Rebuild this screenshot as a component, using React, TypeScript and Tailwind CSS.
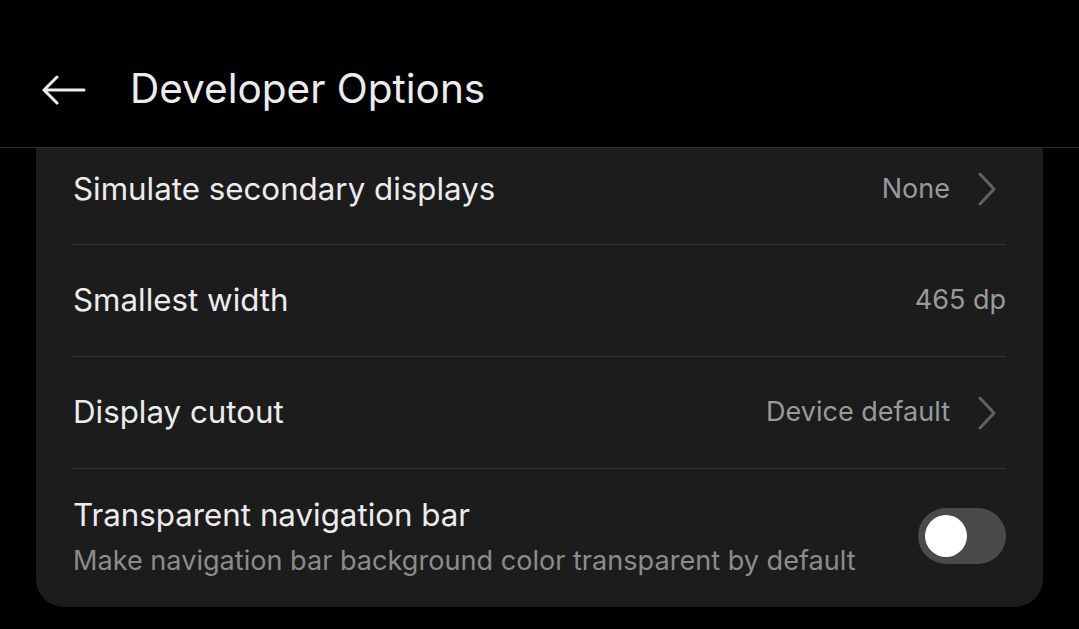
import { useState } from 'react';

function Chevron() {
	return (
		<svg width="20" height="34" viewBox="0 0 20 34" fill="none" className="ml-[27px] mr-[9px]">
			<path d="M3 2 L17 17 L3 32" stroke="#626262" strokeWidth="3" strokeLinecap="round" strokeLinejoin="round" />
		</svg>
	);
}

function Row({ title, value, chevron, className }: { title: string; value: string; chevron?: boolean; className?: string }) {
	return (
		<div className={`flex items-center justify-between border-b border-[#363636] ${className ?? 'h-[112px]'}`}>
			<span className="text-[31.3px] text-[#ececec]">{title}</span>
			<div className="flex items-center">
				<span className="text-[27px] text-[#9a9a9a]">{value}</span>
				{chevron && <Chevron />}
			</div>
		</div>
	);
}

export default function App() {
	const [on, setOn] = useState(false);

	return (
		<div
			className="w-[1079px] h-[629px] bg-black overflow-hidden flex flex-col"
			style={{ fontFamily: 'Inter, "Noto Sans", sans-serif' }}
		>
			<header className="h-[148px] shrink-0 flex items-center pt-[32px] border-b border-[#2e2e2e] relative z-10 bg-black">
				<svg width="44" height="30" viewBox="0 0 44 30" fill="none" className="ml-[42px]">
					<path d="M42 15 H3 M15 2 L2 15 L15 28" stroke="#ececec" strokeWidth="3" strokeLinecap="round" strokeLinejoin="round" />
				</svg>
				<h1 className="ml-[44px] text-[40.5px] text-[#ececec] font-normal">Developer Options</h1>
			</header>
			<main className="flex-1 overflow-hidden px-[36px]">
				<div className="-mt-[30px] bg-[#1c1c1c] rounded-[28px] px-[37px]">
					<Row title="Simulate secondary displays" value="None" chevron className="h-[127px] pt-[16px]" />
					<Row title="Smallest width" value="465 dp" />
					<Row title="Display cutout" value="Device default" chevron />
					<div className="flex items-center justify-between pt-[26px] pb-[24px]">
						<div className="flex flex-col">
							<span className="text-[31.3px] text-[#ececec] leading-[40px]">Transparent navigation bar</span>
							<span className="text-[27.1px] text-[#8c8c8c] leading-[44px] mt-[4px]">
								Make navigation bar background color transparent by default
							</span>
						</div>
						<button
							onClick={() => setOn(!on)}
							className="w-[88px] h-[56px] rounded-full bg-[#4a4a4a] flex items-center px-[7px] shrink-0 -mt-[6px]"
						>
							<span className="w-[42px] h-[42px] rounded-full bg-white block" />
						</button>
					</div>
				</div>
			</main>
		</div>
	);
}
